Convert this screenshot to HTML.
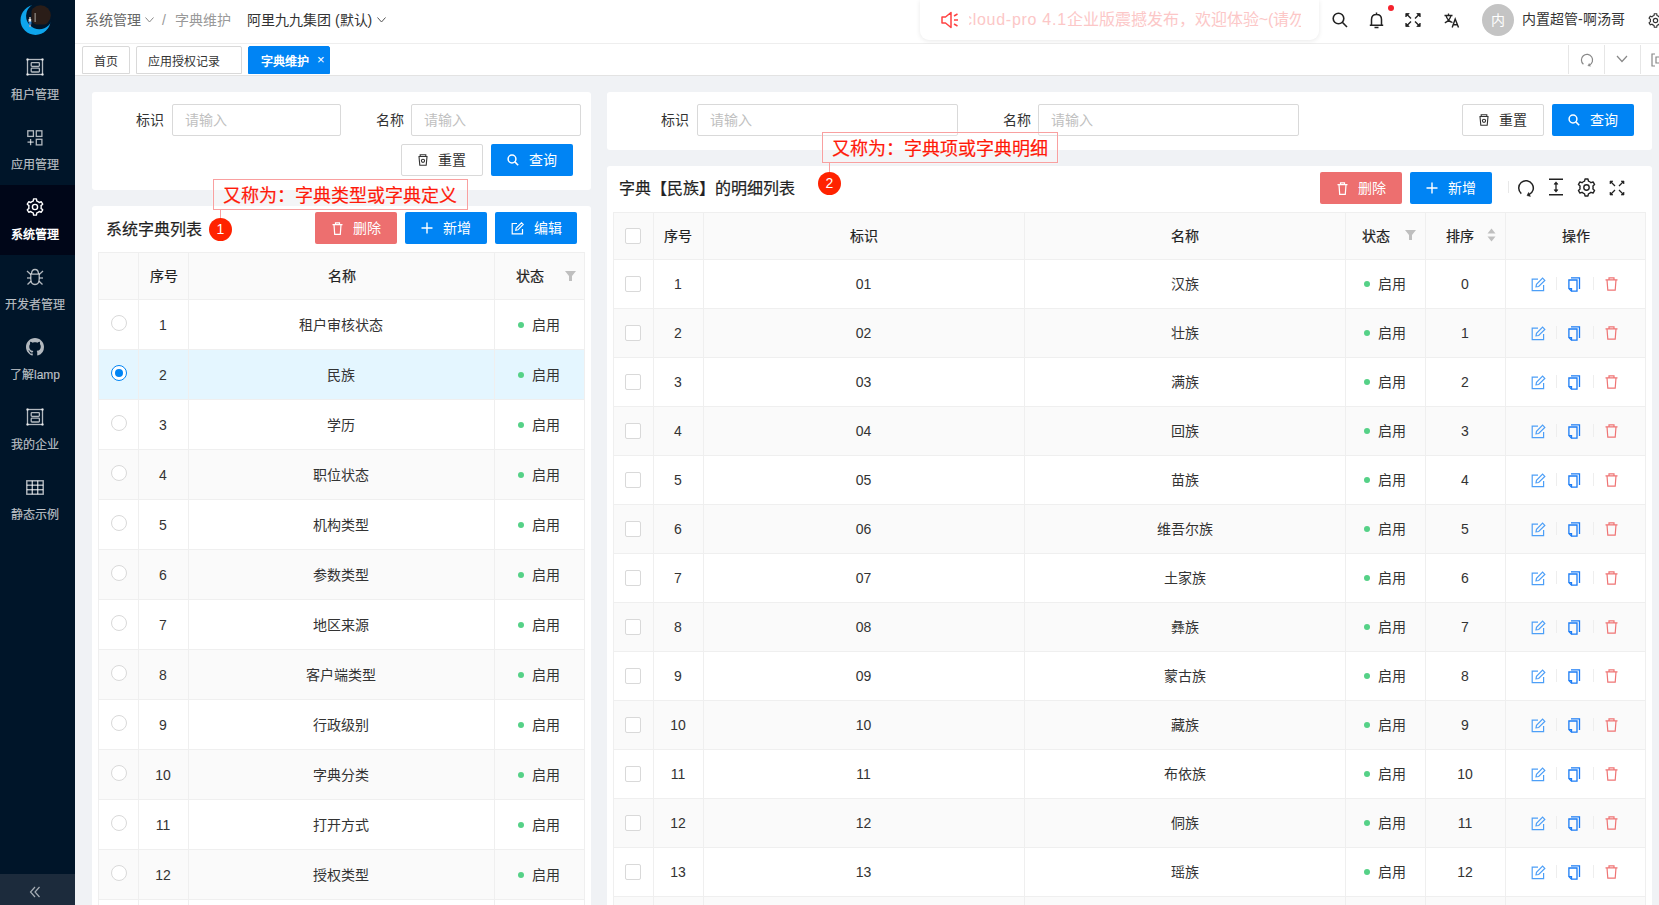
<!DOCTYPE html>
<html lang="zh-CN">
<head>
<meta charset="utf-8">
<style>
*{box-sizing:border-box;margin:0;padding:0}
html,body{width:1659px;height:905px;overflow:hidden;background:#f0f2f5;font-family:"Liberation Sans",sans-serif;font-size:14px;color:#333}
.abs{position:absolute}
svg{display:block}
#side{position:absolute;left:0;top:0;width:75px;height:905px;background:#001529}
.mi{position:absolute;left:0;width:75px;height:70px;color:rgba(255,255,255,.7)}
.mi.act{background:#000618;color:#fff}
.mi .ic{position:absolute;left:0;top:13px;width:75px;height:18px}
.mi .ic svg{}
.mi .tx{position:absolute;left:0;top:42px;width:70px;-webkit-text-stroke:0.15px currentColor;text-align:center;font-size:12px;line-height:16px;white-space:nowrap}
.mi.act .tx{font-weight:bold;-webkit-text-stroke:0}
#trig{position:absolute;left:0;top:874px;width:75px;height:31px;background:#1c2b3c}
#hdr{position:absolute;left:75px;top:0;width:1584px;height:44px;background:#fff;border-bottom:1px solid #eee}
#tabs{position:absolute;left:75px;top:44px;width:1584px;height:32px;background:#fff;border-bottom:1px solid #e3e3e3}
.tab{position:absolute;top:2px;height:28px;border:1px solid #d9d9d9;border-radius:2px 2px 0 0;font-size:12px;line-height:30px;color:#333;text-align:center;background:#fff;white-space:nowrap}
.tab.act{background:#0084f4;border-color:#0084f4;color:#fff;font-weight:bold}
.card{position:absolute;background:#fff;border-radius:3px}
.lbl{position:absolute;font-size:14px;line-height:20px;color:#333;white-space:nowrap}
.inp{position:absolute;height:32px;border:1px solid #d9d9d9;border-radius:2px;background:#fff;color:#bfbfbf;font-size:14px;line-height:30px;padding-left:12px;white-space:nowrap}
.btn{position:absolute;height:32px;border-radius:2px;font-size:14px;line-height:32px;text-align:center;white-space:nowrap}
.btn.def{border:1px solid #d9d9d9;background:#fff;color:#333;line-height:30px}
.btn.pri{background:#0084f4;color:#fff}
.btn.dan{background:#ed6f6f;color:#fff}
.btn svg{display:inline-block;vertical-align:middle;margin-right:10px;position:relative;top:-1px}
.tbl{position:absolute;border-left:1px solid #f0f0f0;border-top:1px solid #f0f0f0}
.row{position:absolute;left:0;border-bottom:1px solid #f0f0f0}
.cell{position:absolute;top:0;height:100%;border-right:1px solid #f0f0f0;text-align:center;white-space:nowrap}
.th{background:#fafafa;font-weight:bold;color:#333}
.dot{display:inline-block;width:6px;height:6px;border-radius:3px;background:#55d187;vertical-align:middle;margin-right:8px;position:relative;top:-1px}
.radio{position:absolute;width:16px;height:16px;border:1px solid #d9d9d9;border-radius:50%;background:#fff}
.radio.on{border-color:#0084f4}
.radio.on:after{content:"";position:absolute;left:3px;top:3px;width:8px;height:8px;border-radius:50%;background:#0084f4}
.chk{position:absolute;width:16px;height:16px;border:1px solid #d9d9d9;border-radius:2px;background:#fff}
.note{position:absolute;border:1px solid #f9a0a0;background:rgba(255,255,255,.25);box-shadow:0 0 2px rgba(255,255,255,.9);color:#ff1a0a;-webkit-text-stroke:0.2px currentColor;font-size:18px;white-space:nowrap}
.badge{position:absolute;width:23px;height:23px;border-radius:50%;background:#ff2200;color:#fff;font-size:14px;line-height:23px;text-align:center}
.vl{position:absolute;width:1px;background:#f9a0a0}
.med{-webkit-text-stroke:0.2px currentColor}
</style>
</head>
<body>

<div id="side">
<svg class="abs" style="left:0;top:0" width="75" height="45" viewBox="0 0 75 45">
<defs><clipPath id="dk"><rect x="31.5" y="5" width="20" height="19.5"/></clipPath></defs>
<circle cx="35.5" cy="20" r="15" fill="#0ea5ec"/>
<circle cx="39.3" cy="16" r="13.2" fill="#001529"/>
<circle cx="40.5" cy="15.5" r="10.3" fill="#2a1d18" clip-path="url(#dk)"/>
<rect x="34.5" y="13" width="1.3" height="9" fill="#8a8580"/>
<rect x="28.6" y="19" width="2.6" height="3" fill="#e8e8e8"/><rect x="28.8" y="21.5" width="2.6" height="3" fill="#2a7cc8"/><rect x="29.2" y="24.5" width="1.6" height="2.5" fill="#aab"/>
<circle cx="30" cy="18" r="1" fill="#c9b8a8"/>
</svg>
<div class="mi" style="top:45px"><div class="ic"><svg width="18" height="18" viewBox="0 0 18 18" fill="none" stroke="currentColor" stroke-width="1.3" style="margin-left:26px">
<rect x="1.5" y="1.5" width="15" height="15"/><rect x="5.2" y="4.6" width="8.2" height="3.8" rx="0.8"/><rect x="5.2" y="10.2" width="8.2" height="3.8" rx="0.8"/>
<circle cx="1.5" cy="1.5" r="1.2" fill="currentColor" stroke="none"/><circle cx="16.5" cy="1.5" r="1.2" fill="currentColor" stroke="none"/><circle cx="1.5" cy="16.5" r="1.2" fill="currentColor" stroke="none"/><circle cx="16.5" cy="16.5" r="1.2" fill="currentColor" stroke="none"/></svg></div><div class="tx">租户管理</div></div>
<div class="mi" style="top:115px"><div class="ic"><svg width="16" height="16" viewBox="0 0 16 16" fill="none" stroke="currentColor" stroke-width="1.3" style="margin-left:27px;margin-top:2px">
<rect x="0.8" y="0.8" width="5.6" height="5.6"/><rect x="9.3" y="0.8" width="5.6" height="5.6"/><rect x="9.3" y="9.3" width="5.6" height="5.6"/>
<line x1="3.6" y1="9" x2="3.6" y2="15.2"/><line x1="0.5" y1="12.1" x2="6.7" y2="12.1"/></svg></div><div class="tx">应用管理</div></div>
<div class="mi act" style="top:185px"><div class="ic"><svg width="18" height="18" viewBox="0 0 18 18" fill="none" stroke="currentColor" stroke-width="1.4" stroke-linejoin="round" style="margin-left:26px">
<path d="M7.19 3.07 L7.58 0.92 L10.42 0.92 L10.81 3.07 A6.2 6.2 0 0 1 13.23 4.47 L13.23 4.47 L15.28 3.73 L16.71 6.20 L15.04 7.61 A6.2 6.2 0 0 1 15.04 10.39 L15.04 10.39 L16.71 11.80 L15.28 14.27 L13.23 13.53 A6.2 6.2 0 0 1 10.81 14.93 L10.81 14.93 L10.42 17.08 L7.58 17.08 L7.19 14.93 A6.2 6.2 0 0 1 4.77 13.53 L4.77 13.53 L2.72 14.27 L1.29 11.80 L2.96 10.39 A6.2 6.2 0 0 1 2.96 7.61 L2.96 7.61 L1.29 6.20 L2.72 3.73 L4.77 4.47 A6.2 6.2 0 0 1 7.19 3.07Z"/><circle cx="9" cy="9" r="2.6"/></svg></div><div class="tx">系统管理</div></div>
<div class="mi" style="top:255px"><div class="ic"><svg width="18" height="18" viewBox="0 0 18 18" fill="none" stroke="currentColor" stroke-width="1.3" style="margin-left:26px">
<path d="M5.5 6 Q5.5 1.5 9 1.5 Q12.5 1.5 12.5 6"/><path d="M4.8 6.2 H13.2 V11 Q13.2 16.5 9 16.5 Q4.8 16.5 4.8 11Z"/>
<line x1="1" y1="3" x2="4.8" y2="6.5"/><line x1="17" y1="3" x2="13.2" y2="6.5"/><line x1="1" y1="10" x2="4.8" y2="10"/><line x1="17" y1="10" x2="13.2" y2="10"/><line x1="1.5" y1="16.5" x2="4.9" y2="13.2"/><line x1="16.5" y1="16.5" x2="13.1" y2="13.2"/></svg></div><div class="tx">开发者管理</div></div>
<div class="mi" style="top:325px"><div class="ic"><svg width="18" height="18" viewBox="0 0 16 16" style="margin-left:26px"><path fill="currentColor" d="M8 0C3.58 0 0 3.58 0 8c0 3.54 2.29 6.53 5.47 7.59.4.07.55-.17.55-.38 0-.19-.01-.82-.01-1.49-2.01.37-2.53-.49-2.69-.94-.09-.23-.48-.94-.82-1.13-.28-.15-.68-.52-.01-.53.63-.01 1.08.58 1.23.82.72 1.21 1.87.87 2.330.66.07-.52.28-.87.51-1.07-1.78-.2-3.640-.89-3.640-3.95 0-.87.31-1.59.82-2.15-.08-.2-.36-1.02.08-2.12 0 0 .67-.21 2.2.82.64-.18 1.32-.27 2-.27.68 0 1.36.09 2 .27 1.53-1.04 2.2-.82 2.2-.82.44 1.1.16 1.92.08 2.12.51.56.82 1.27.82 2.15 0 3.07-1.87 3.75-3.65 3.95.29.25.54.73.54 1.48 0 1.07-.01 1.93-.01 2.2 0 .21.15.46.55.38A8.013 8.013 0 0016 8c0-4.42-3.58-8-8-8z"/></svg></div><div class="tx">了解lamp</div></div>
<div class="mi" style="top:395px"><div class="ic"><svg width="18" height="18" viewBox="0 0 18 18" fill="none" stroke="currentColor" stroke-width="1.3" style="margin-left:26px">
<rect x="1.5" y="1.5" width="15" height="15"/><rect x="5.2" y="4.6" width="8.2" height="3.8" rx="0.8"/><rect x="5.2" y="10.2" width="8.2" height="3.8" rx="0.8"/>
<circle cx="1.5" cy="1.5" r="1.2" fill="currentColor" stroke="none"/><circle cx="16.5" cy="1.5" r="1.2" fill="currentColor" stroke="none"/><circle cx="1.5" cy="16.5" r="1.2" fill="currentColor" stroke="none"/><circle cx="16.5" cy="16.5" r="1.2" fill="currentColor" stroke="none"/></svg></div><div class="tx">我的企业</div></div>
<div class="mi" style="top:465px"><div class="ic"><svg width="18" height="15" viewBox="0 0 18 15" fill="none" stroke="currentColor" stroke-width="1.4" style="margin-left:26px;margin-top:2px">
<rect x="0.8" y="0.8" width="16.4" height="13.4"/><line x1="0.8" y1="5.2" x2="17.2" y2="5.2"/><line x1="0.8" y1="9.7" x2="17.2" y2="9.7"/><line x1="6.3" y1="0.8" x2="6.3" y2="14.2"/><line x1="11.7" y1="0.8" x2="11.7" y2="14.2"/></svg></div><div class="tx">静态示例</div></div>
<div id="trig"><svg class="abs" style="left:29px;top:12px" width="12" height="12" viewBox="0 0 12 12" fill="none" stroke="#a6adb4" stroke-width="1.2"><path d="M6 1 L1.5 6 L6 11 M10.5 1 L6 6 L10.5 11"/></svg></div>
</div>
<div id="hdr"></div>
<div class="abs" style="left:85px;top:10px;font-size:14px;line-height:20px;color:#666;white-space:nowrap">系统管理</div>
<svg class="abs" style="left:145px;top:17px" width="9" height="6" viewBox="0 0 9 6" fill="none" stroke="#888" stroke-width="1"><path d="M0.5 0.5 L4.5 5 L8.5 0.5"/></svg>
<div class="abs" style="left:162px;top:10px;font-size:14px;line-height:20px;color:#999">/</div>
<div class="abs" style="left:175px;top:10px;font-size:14px;line-height:20px;color:#999;white-space:nowrap">字典维护</div>
<div class="abs" style="left:247px;top:10px;font-size:14px;line-height:20px;color:#333;white-space:nowrap">阿里九九集团 (默认)</div>
<svg class="abs" style="left:377px;top:17px" width="9" height="6" viewBox="0 0 9 6" fill="none" stroke="#555" stroke-width="1"><path d="M0.5 0.5 L4.5 5 L8.5 0.5"/></svg>
<div class="abs" style="left:920px;top:0;width:399px;height:40px;background:#fff;border-radius:0 0 9px 9px;box-shadow:0 1px 5px rgba(0,0,0,.09);overflow:hidden"><svg class="abs" style="left:21px;top:11px" width="18" height="18" viewBox="0 0 18 18" fill="none" stroke="#ff4242" stroke-width="1.5" stroke-linejoin="round"><path d="M1 6 H4.5 L10 1.5 V16.5 L4.5 12 H1Z"/><path d="M13 5 L16.5 3 M13 9 H17 M13 13 L16.5 15"/></svg><div class="abs" style="left:49px;top:0;width:332px;height:40px;overflow:hidden"><div class="abs" style="left:-5px;top:10px;font-size:16px;line-height:20px;color:#fcc7c7;white-space:nowrap"><span style="letter-spacing:0.72px">cloud-pro 4.1</span>企业版震撼发布，欢迎体验~(请勿</div></div></div>
<svg class="abs" style="left:1332px;top:12px" width="16" height="16" viewBox="0 0 16 16" fill="none" stroke="#222" stroke-width="1.6"><circle cx="6.5" cy="6.5" r="5.3"/><line x1="10.3" y1="10.3" x2="15" y2="15"/></svg>
<svg class="abs" style="left:1369px;top:12px" width="15" height="17" viewBox="0 0 15 17" fill="none" stroke="#222" stroke-width="1.5"><path d="M2.5 13 V7.5 Q2.5 2.5 7.5 2.5 Q12.5 2.5 12.5 7.5 V13 M0.8 13.2 H14.2 M7.5 0.5 V2.5 M5.5 15.5 H9.5"/></svg>
<div class="abs" style="left:1388px;top:5px;width:6px;height:6px;border-radius:3px;background:#f5222d"></div>
<svg class="abs" style="left:1405px;top:13px" width="16" height="14" viewBox="0 0 16 14" fill="none" stroke="#222" stroke-width="1.4"><path d="M2 1.5 L6 5.5 M14 1.5 L10 5.5 M2 12.5 L6 8.5 M14 12.5 L10 8.5"/><path d="M0.8 0.5 H4.2 L0.8 3.9Z M15.2 0.5 H11.8 L15.2 3.9Z M0.8 13.5 H4.2 L0.8 10.1Z M15.2 13.5 H11.8 L15.2 10.1Z" fill="#222" stroke-width="0.8"/></svg>
<svg class="abs" style="left:1444px;top:13px" width="16" height="15" viewBox="0 0 16 15" fill="none" stroke="#222" stroke-width="1.3"><path d="M0.5 2.5 H8.5 M4.5 0.5 V2.5 M2 2.5 Q3.5 8 8.5 9.5 M7 2.5 Q5.5 8 0.8 9.8"/><path d="M8.2 14.5 L11.2 6 L14.5 14.5 M9.3 11.8 H13.3" stroke-width="1.4"/></svg>
<div class="abs" style="left:1482px;top:4px;width:32px;height:32px;border-radius:16px;background:#c4c4c4;color:#fff;font-size:14px;line-height:32px;text-align:center">内</div>
<div class="abs" style="left:1522px;top:9px;font-size:14px;line-height:20px;color:#333;white-space:nowrap">内置超管-啊汤哥</div>
<svg class="abs" style="left:1648px;top:13px" width="15" height="15" viewBox="0 0 18 18" fill="none" stroke="#333" stroke-width="1.4"><path d="M7.19 3.07 L7.58 0.92 L10.42 0.92 L10.81 3.07 A6.2 6.2 0 0 1 13.23 4.47 L13.23 4.47 L15.28 3.73 L16.71 6.20 L15.04 7.61 A6.2 6.2 0 0 1 15.04 10.39 L15.04 10.39 L16.71 11.80 L15.28 14.27 L13.23 13.53 A6.2 6.2 0 0 1 10.81 14.93 L10.81 14.93 L10.42 17.08 L7.58 17.08 L7.19 14.93 A6.2 6.2 0 0 1 4.77 13.53 L4.77 13.53 L2.72 14.27 L1.29 11.80 L2.96 10.39 A6.2 6.2 0 0 1 2.96 7.61 L2.96 7.61 L1.29 6.20 L2.72 3.73 L4.77 4.47 A6.2 6.2 0 0 1 7.19 3.07Z"/><circle cx="9" cy="9" r="2.6"/></svg>
<div id="tabs"></div>
<div class="tab" style="left:82px;top:46px;width:48px">首页</div>
<div class="tab" style="left:136px;top:46px;width:106px;text-align:left;padding-left:11px">应用授权记录</div>
<div class="tab act" style="left:248px;top:46px;width:82px;text-align:left;padding-left:12px">字典维护<span style="position:absolute;left:68px;top:-2px;font-weight:normal;font-size:13px">×</span></div>
<div class="abs" style="left:1568px;top:45px;width:1px;height:29px;background:#e6e6e6"></div>
<div class="abs" style="left:1604px;top:45px;width:1px;height:29px;background:#e6e6e6"></div>
<div class="abs" style="left:1640px;top:45px;width:1px;height:29px;background:#e6e6e6"></div>
<svg class="abs" style="left:1580px;top:53px" width="14" height="14" viewBox="0 0 14 14" fill="none" stroke="#888" stroke-width="1.2"><path d="M3.40 11.29 A5.6 5.6 0 1 1 9.28 12.12"/><path d="M7.82 12.77 L10.48 13.33 L9.18 10.41Z" fill="#888" stroke-width="0.4"/></svg>
<svg class="abs" style="left:1616px;top:55px" width="12" height="8" viewBox="0 0 12 8" fill="none" stroke="#888" stroke-width="1.2"><path d="M1 1 L6 6.5 L11 1"/></svg>
<svg class="abs" style="left:1651px;top:53px" width="14" height="14" viewBox="0 0 14 14" fill="none" stroke="#888" stroke-width="1.2"><path d="M4 1 H1 V13 H4 M5 4 H13 V10 H5Z"/></svg>
<div class="card" style="left:92px;top:92px;width:499px;height:98px"></div>
<div class="lbl" style="left:136px;top:110px">标识</div>
<div class="inp" style="left:172px;top:104px;width:169px">请输入</div>
<div class="lbl" style="left:376px;top:110px">名称</div>
<div class="inp" style="left:411px;top:104px;width:170px">请输入</div>
<div class="btn def" style="left:401px;top:144px;width:82px"><svg width="10" height="12" viewBox="0 0 10 12" fill="none" stroke="#333" stroke-width="1.1"><path d="M1 2.5 H9 L8.2 11.2 H1.8Z M2.2 2.5 V0.8 H7.8 V2.5"/><circle cx="5" cy="6.8" r="1.6"/></svg><span>重置</span></div>
<div class="btn pri" style="left:491px;top:144px;width:82px"><svg width="12" height="12" viewBox="0 0 12 12" fill="none" stroke="#fff" stroke-width="1.5"><circle cx="5" cy="5" r="3.9"/><line x1="7.9" y1="7.9" x2="11.2" y2="11.2"/></svg><span>查询</span></div>
<div class="card" style="left:92px;top:206px;width:499px;height:720px"></div>
<div class="abs med" style="left:106px;top:219px;font-size:16px;line-height:22px;color:#222;white-space:nowrap">系统字典列表</div>
<div class="btn dan" style="left:315px;top:212px;width:82px"><svg width="11" height="13" viewBox="0 0 11 13" fill="none" stroke="#fff" stroke-width="1.2"><path d="M0.5 2.6 H10.5 M2 2.6 L2.7 12.3 H8.3 L9 2.6 M3.5 2.6 V0.8 H7.5 V2.6"/></svg><span>删除</span></div>
<div class="btn pri" style="left:405px;top:212px;width:82px"><svg width="12" height="12" viewBox="0 0 12 12" fill="none" stroke="#fff" stroke-width="1.4"><path d="M6 0.5 V11.5 M0.5 6 H11.5"/></svg><span>新增</span></div>
<div class="btn pri" style="left:495px;top:212px;width:82px"><svg width="13" height="13" viewBox="0 0 13 13" fill="none" stroke="#fff" stroke-width="1.2"><path d="M6 1.5 H1.2 V11.8 H11.5 V7"/><path d="M4.8 8.2 L5.2 6 L10.5 0.8 L12.2 2.5 L7 7.8Z"/></svg><span>编辑</span></div>
<div class="abs" style="left:98px;top:252px;width:487px;height:653px;overflow:hidden">
<div class="abs" style="left:0;top:0;width:487px;height:48px;background:#fafafa;border-top:1px solid #efefef;border-bottom:1px solid #efefef"></div>
<div class="abs med" style="left:40px;top:0px;width:51px;height:48px;line-height:49px;text-align:center;font-weight:500;color:#222;white-space:nowrap">序号</div>
<div class="abs med" style="left:91px;top:0px;width:305px;height:48px;line-height:49px;text-align:center;font-weight:500;color:#222;white-space:nowrap">名称</div>
<div class="abs med" style="left:418px;top:0;height:48px;line-height:48px;font-weight:500;color:#222;white-space:nowrap">状态</div>
<svg class="abs" style="left:467px;top:19px" width="11" height="11" viewBox="0 0 11 11"><path d="M0 0 H11 L7 5 V10 H4 V5Z" fill="#bfbfbf"/></svg>
<div class="abs" style="left:0;top:48px;width:487px;height:50px;background:#fff;border-bottom:1px solid #efefef"><div class="radio" style="left:13px;top:15px"></div><div class="abs" style="left:40px;top:1px;width:50px;line-height:49px;text-align:center">1</div><div class="abs" style="left:90px;top:1px;width:306px;line-height:49px;text-align:center">租户审核状态</div><div class="abs" style="left:420px;top:1px;line-height:49px;white-space:nowrap"><span class="dot"></span>启用</div></div>
<div class="abs" style="left:0;top:98px;width:487px;height:50px;background:#e4f6ff;border-bottom:1px solid #efefef"><div class="radio on" style="left:13px;top:15px"></div><div class="abs" style="left:40px;top:1px;width:50px;line-height:49px;text-align:center">2</div><div class="abs" style="left:90px;top:1px;width:306px;line-height:49px;text-align:center">民族</div><div class="abs" style="left:420px;top:1px;line-height:49px;white-space:nowrap"><span class="dot"></span>启用</div></div>
<div class="abs" style="left:0;top:148px;width:487px;height:50px;background:#fff;border-bottom:1px solid #efefef"><div class="radio" style="left:13px;top:15px"></div><div class="abs" style="left:40px;top:1px;width:50px;line-height:49px;text-align:center">3</div><div class="abs" style="left:90px;top:1px;width:306px;line-height:49px;text-align:center">学历</div><div class="abs" style="left:420px;top:1px;line-height:49px;white-space:nowrap"><span class="dot"></span>启用</div></div>
<div class="abs" style="left:0;top:198px;width:487px;height:50px;background:#fafafa;border-bottom:1px solid #efefef"><div class="radio" style="left:13px;top:15px"></div><div class="abs" style="left:40px;top:1px;width:50px;line-height:49px;text-align:center">4</div><div class="abs" style="left:90px;top:1px;width:306px;line-height:49px;text-align:center">职位状态</div><div class="abs" style="left:420px;top:1px;line-height:49px;white-space:nowrap"><span class="dot"></span>启用</div></div>
<div class="abs" style="left:0;top:248px;width:487px;height:50px;background:#fff;border-bottom:1px solid #efefef"><div class="radio" style="left:13px;top:15px"></div><div class="abs" style="left:40px;top:1px;width:50px;line-height:49px;text-align:center">5</div><div class="abs" style="left:90px;top:1px;width:306px;line-height:49px;text-align:center">机构类型</div><div class="abs" style="left:420px;top:1px;line-height:49px;white-space:nowrap"><span class="dot"></span>启用</div></div>
<div class="abs" style="left:0;top:298px;width:487px;height:50px;background:#fafafa;border-bottom:1px solid #efefef"><div class="radio" style="left:13px;top:15px"></div><div class="abs" style="left:40px;top:1px;width:50px;line-height:49px;text-align:center">6</div><div class="abs" style="left:90px;top:1px;width:306px;line-height:49px;text-align:center">参数类型</div><div class="abs" style="left:420px;top:1px;line-height:49px;white-space:nowrap"><span class="dot"></span>启用</div></div>
<div class="abs" style="left:0;top:348px;width:487px;height:50px;background:#fff;border-bottom:1px solid #efefef"><div class="radio" style="left:13px;top:15px"></div><div class="abs" style="left:40px;top:1px;width:50px;line-height:49px;text-align:center">7</div><div class="abs" style="left:90px;top:1px;width:306px;line-height:49px;text-align:center">地区来源</div><div class="abs" style="left:420px;top:1px;line-height:49px;white-space:nowrap"><span class="dot"></span>启用</div></div>
<div class="abs" style="left:0;top:398px;width:487px;height:50px;background:#fafafa;border-bottom:1px solid #efefef"><div class="radio" style="left:13px;top:15px"></div><div class="abs" style="left:40px;top:1px;width:50px;line-height:49px;text-align:center">8</div><div class="abs" style="left:90px;top:1px;width:306px;line-height:49px;text-align:center">客户端类型</div><div class="abs" style="left:420px;top:1px;line-height:49px;white-space:nowrap"><span class="dot"></span>启用</div></div>
<div class="abs" style="left:0;top:448px;width:487px;height:50px;background:#fff;border-bottom:1px solid #efefef"><div class="radio" style="left:13px;top:15px"></div><div class="abs" style="left:40px;top:1px;width:50px;line-height:49px;text-align:center">9</div><div class="abs" style="left:90px;top:1px;width:306px;line-height:49px;text-align:center">行政级别</div><div class="abs" style="left:420px;top:1px;line-height:49px;white-space:nowrap"><span class="dot"></span>启用</div></div>
<div class="abs" style="left:0;top:498px;width:487px;height:50px;background:#fafafa;border-bottom:1px solid #efefef"><div class="radio" style="left:13px;top:15px"></div><div class="abs" style="left:40px;top:1px;width:50px;line-height:49px;text-align:center">10</div><div class="abs" style="left:90px;top:1px;width:306px;line-height:49px;text-align:center">字典分类</div><div class="abs" style="left:420px;top:1px;line-height:49px;white-space:nowrap"><span class="dot"></span>启用</div></div>
<div class="abs" style="left:0;top:548px;width:487px;height:50px;background:#fff;border-bottom:1px solid #efefef"><div class="radio" style="left:13px;top:15px"></div><div class="abs" style="left:40px;top:1px;width:50px;line-height:49px;text-align:center">11</div><div class="abs" style="left:90px;top:1px;width:306px;line-height:49px;text-align:center">打开方式</div><div class="abs" style="left:420px;top:1px;line-height:49px;white-space:nowrap"><span class="dot"></span>启用</div></div>
<div class="abs" style="left:0;top:598px;width:487px;height:50px;background:#fafafa;border-bottom:1px solid #efefef"><div class="radio" style="left:13px;top:15px"></div><div class="abs" style="left:40px;top:1px;width:50px;line-height:49px;text-align:center">12</div><div class="abs" style="left:90px;top:1px;width:306px;line-height:49px;text-align:center">授权类型</div><div class="abs" style="left:420px;top:1px;line-height:49px;white-space:nowrap"><span class="dot"></span>启用</div></div>
<div class="abs" style="left:0;top:648px;width:487px;height:50px;background:#fff;border-bottom:1px solid #efefef"><div class="radio" style="left:13px;top:15px"></div><div class="abs" style="left:40px;top:1px;width:50px;line-height:49px;text-align:center">13</div><div class="abs" style="left:90px;top:1px;width:306px;line-height:49px;text-align:center">码表类型</div><div class="abs" style="left:420px;top:1px;line-height:49px;white-space:nowrap"><span class="dot"></span>启用</div></div>
<div class="abs" style="left:0px;top:0;width:1px;height:653px;background:#efefef"></div>
<div class="abs" style="left:40px;top:0;width:1px;height:653px;background:#efefef"></div>
<div class="abs" style="left:90px;top:0;width:1px;height:653px;background:#efefef"></div>
<div class="abs" style="left:396px;top:0;width:1px;height:653px;background:#efefef"></div>
<div class="abs" style="left:486px;top:0;width:1px;height:653px;background:#efefef"></div>
</div>
<div class="card" style="left:607px;top:92px;width:1045px;height:58px"></div>
<div class="lbl" style="left:661px;top:110px">标识</div>
<div class="inp" style="left:697px;top:104px;width:261px">请输入</div>
<div class="lbl" style="left:1003px;top:110px">名称</div>
<div class="inp" style="left:1038px;top:104px;width:261px">请输入</div>
<div class="btn def" style="left:1462px;top:104px;width:82px"><svg width="10" height="12" viewBox="0 0 10 12" fill="none" stroke="#333" stroke-width="1.1"><path d="M1 2.5 H9 L8.2 11.2 H1.8Z M2.2 2.5 V0.8 H7.8 V2.5"/><circle cx="5" cy="6.8" r="1.6"/></svg><span>重置</span></div>
<div class="btn pri" style="left:1552px;top:104px;width:82px"><svg width="12" height="12" viewBox="0 0 12 12" fill="none" stroke="#fff" stroke-width="1.5"><circle cx="5" cy="5" r="3.9"/><line x1="7.9" y1="7.9" x2="11.2" y2="11.2"/></svg><span>查询</span></div>
<div class="card" style="left:607px;top:166px;width:1045px;height:760px"></div>
<div class="abs med" style="left:619px;top:178px;font-size:16px;line-height:22px;color:#222;white-space:nowrap">字典【民族】的明细列表</div>
<div class="btn dan" style="left:1320px;top:172px;width:82px"><svg width="11" height="13" viewBox="0 0 11 13" fill="none" stroke="#fff" stroke-width="1.2"><path d="M0.5 2.6 H10.5 M2 2.6 L2.7 12.3 H8.3 L9 2.6 M3.5 2.6 V0.8 H7.5 V2.6"/></svg><span>删除</span></div>
<div class="btn pri" style="left:1410px;top:172px;width:82px"><svg width="12" height="12" viewBox="0 0 12 12" fill="none" stroke="#fff" stroke-width="1.4"><path d="M6 0.5 V11.5 M0.5 6 H11.5"/></svg><span>新增</span></div>
<div class="abs" style="left:1508px;top:181px;width:1px;height:12px;background:#e8e8e8"></div>
<svg class="abs" style="left:1517px;top:179px" width="18" height="18" viewBox="0 0 18 18" fill="none" stroke="#222" stroke-width="1.5"><path d="M4.31 14.59 A7.3 7.3 0 1 1 11.97 15.67"/><path d="M9.96 16.56 L13.41 17.43 L11.62 13.42Z" fill="#222" stroke-width="0.5"/></svg>
<svg class="abs" style="left:1548px;top:178px" width="16" height="18" viewBox="0 0 16 18" fill="none" stroke="#222" stroke-width="1.5"><path d="M1 1.2 H15 M1 16.8 H15"/><path d="M8 5 V13" stroke-width="1.3"/><path d="M6 6.2 L8 3.8 L10 6.2Z M6 11.8 L8 14.2 L10 11.8Z" fill="#222" stroke-width="0.6"/></svg>
<svg class="abs" style="left:1577px;top:178px" width="19" height="19" viewBox="0 0 19 19" fill="none" stroke="#222" stroke-width="1.4" stroke-linejoin="round"><path d="M7.57 3.19 L8.01 1.03 L10.99 1.03 L11.43 3.19 A6.6 6.6 0 0 1 14.00 4.67 L14.00 4.67 L16.09 3.97 L17.58 6.56 L15.93 8.02 A6.6 6.6 0 0 1 15.93 10.98 L15.93 10.98 L17.58 12.44 L16.09 15.03 L14.00 14.33 A6.6 6.6 0 0 1 11.43 15.81 L11.43 15.81 L10.99 17.97 L8.01 17.97 L7.57 15.81 A6.6 6.6 0 0 1 5.00 14.33 L5.00 14.33 L2.91 15.03 L1.42 12.44 L3.07 10.98 A6.6 6.6 0 0 1 3.07 8.02 L3.07 8.02 L1.42 6.56 L2.91 3.97 L5.00 4.67 A6.6 6.6 0 0 1 7.57 3.19Z"/><circle cx="9.5" cy="9.5" r="2.7"/></svg>
<svg class="abs" style="left:1609px;top:180px" width="16" height="16" viewBox="0 0 16 16" fill="none" stroke="#222" stroke-width="1.5"><path d="M2 2 L6 6 M14 2 L10 6 M2 14 L6 10 M14 14 L10 10" stroke-width="1.3"/><path d="M1 1 H4 L1 4Z M15 1 H12 L15 4Z M1 15 H4 L1 12Z M15 15 H12 L15 12Z" fill="#222" stroke-width="0.6"/></svg>
<div class="abs" style="left:613px;top:212px;width:1033px;height:693px;overflow:hidden">
<div class="abs" style="left:0;top:0;width:1033px;height:48px;background:#fafafa;border-top:1px solid #efefef;border-bottom:1px solid #efefef"></div>
<div class="chk" style="left:12px;top:16px"></div>
<div class="abs med" style="left:40px;top:0px;width:50px;height:47px;line-height:48px;text-align:center;font-weight:500;color:#222;white-space:nowrap">序号</div>
<div class="abs med" style="left:90px;top:0px;width:321px;height:47px;line-height:48px;text-align:center;font-weight:500;color:#222;white-space:nowrap">标识</div>
<div class="abs med" style="left:411px;top:0px;width:322px;height:47px;line-height:48px;text-align:center;font-weight:500;color:#222;white-space:nowrap">名称</div>
<div class="abs med" style="left:749px;top:0;line-height:48px;font-weight:500;color:#222;white-space:nowrap">状态</div>
<svg class="abs" style="left:792px;top:18px" width="11" height="11" viewBox="0 0 11 11"><path d="M0 0 H11 L7 5 V10 H4 V5Z" fill="#bfbfbf"/></svg>
<div class="abs med" style="left:833px;top:0;line-height:48px;font-weight:500;color:#222;white-space:nowrap">排序</div>
<svg class="abs" style="left:874px;top:16px" width="9" height="14" viewBox="0 0 9 14"><path d="M4.5 0.5 L8.5 5.5 H0.5Z M4.5 13.5 L8.5 8.5 H0.5Z" fill="#bfbfbf"/></svg>
<div class="abs med" style="left:892px;top:0px;width:141px;height:47px;line-height:48px;text-align:center;font-weight:500;color:#222;white-space:nowrap">操作</div>
<div class="abs" style="left:0;top:48px;width:1033px;height:49px;background:#fff;border-bottom:1px solid #efefef"><div class="chk" style="left:12px;top:16px"></div><div class="abs" style="left:40px;top:0;width:50px;line-height:48px;text-align:center">1</div><div class="abs" style="left:90px;top:0;width:321px;line-height:48px;text-align:center">01</div><div class="abs" style="left:411px;top:0;width:322px;line-height:48px;text-align:center">汉族</div><div class="abs" style="left:751px;top:0;line-height:48px;white-space:nowrap"><span class="dot"></span>启用</div><div class="abs" style="left:812px;top:0;width:80px;line-height:48px;text-align:center">0</div><svg class="abs" style="left:918px;top:17px" width="15" height="15" viewBox="0 0 15 15" fill="none" stroke="#4d9ff7" stroke-width="1.2"><path d="M7 2.2 H1.2 V13.6 H12.6 V8"/><path d="M5 9.8 L5.5 7.3 L11.6 1.2 L13.8 3.4 L7.7 9.5Z"/></svg><div class="abs" style="left:943px;top:17px;width:1px;height:13px;background:#eee"></div><svg class="abs" style="left:955px;top:17px" width="13" height="15" viewBox="0 0 13 15" fill="none" stroke="#1b7cf5" stroke-width="1.3"><path d="M3 0.8 H11.5 V12"/><path d="M0.9 3 H9 V14.2 H3.5 L0.9 11.6Z"/><path d="M0.9 11.6 H3.5 V14.2"/></svg><div class="abs" style="left:980px;top:17px;width:1px;height:13px;background:#eee"></div><svg class="abs" style="left:992px;top:17px" width="13" height="14" viewBox="0 0 13 14" fill="none" stroke="#ef7474" stroke-width="1.2"><path d="M0.5 2.8 H12.5 M2 2.8 L2.8 13.2 H10.2 L11 2.8 M4 2.8 V0.8 H9 V2.8"/></svg></div>
<div class="abs" style="left:0;top:97px;width:1033px;height:49px;background:#fafafa;border-bottom:1px solid #efefef"><div class="chk" style="left:12px;top:16px"></div><div class="abs" style="left:40px;top:0;width:50px;line-height:48px;text-align:center">2</div><div class="abs" style="left:90px;top:0;width:321px;line-height:48px;text-align:center">02</div><div class="abs" style="left:411px;top:0;width:322px;line-height:48px;text-align:center">壮族</div><div class="abs" style="left:751px;top:0;line-height:48px;white-space:nowrap"><span class="dot"></span>启用</div><div class="abs" style="left:812px;top:0;width:80px;line-height:48px;text-align:center">1</div><svg class="abs" style="left:918px;top:17px" width="15" height="15" viewBox="0 0 15 15" fill="none" stroke="#4d9ff7" stroke-width="1.2"><path d="M7 2.2 H1.2 V13.6 H12.6 V8"/><path d="M5 9.8 L5.5 7.3 L11.6 1.2 L13.8 3.4 L7.7 9.5Z"/></svg><div class="abs" style="left:943px;top:17px;width:1px;height:13px;background:#eee"></div><svg class="abs" style="left:955px;top:17px" width="13" height="15" viewBox="0 0 13 15" fill="none" stroke="#1b7cf5" stroke-width="1.3"><path d="M3 0.8 H11.5 V12"/><path d="M0.9 3 H9 V14.2 H3.5 L0.9 11.6Z"/><path d="M0.9 11.6 H3.5 V14.2"/></svg><div class="abs" style="left:980px;top:17px;width:1px;height:13px;background:#eee"></div><svg class="abs" style="left:992px;top:17px" width="13" height="14" viewBox="0 0 13 14" fill="none" stroke="#ef7474" stroke-width="1.2"><path d="M0.5 2.8 H12.5 M2 2.8 L2.8 13.2 H10.2 L11 2.8 M4 2.8 V0.8 H9 V2.8"/></svg></div>
<div class="abs" style="left:0;top:146px;width:1033px;height:49px;background:#fff;border-bottom:1px solid #efefef"><div class="chk" style="left:12px;top:16px"></div><div class="abs" style="left:40px;top:0;width:50px;line-height:48px;text-align:center">3</div><div class="abs" style="left:90px;top:0;width:321px;line-height:48px;text-align:center">03</div><div class="abs" style="left:411px;top:0;width:322px;line-height:48px;text-align:center">满族</div><div class="abs" style="left:751px;top:0;line-height:48px;white-space:nowrap"><span class="dot"></span>启用</div><div class="abs" style="left:812px;top:0;width:80px;line-height:48px;text-align:center">2</div><svg class="abs" style="left:918px;top:17px" width="15" height="15" viewBox="0 0 15 15" fill="none" stroke="#4d9ff7" stroke-width="1.2"><path d="M7 2.2 H1.2 V13.6 H12.6 V8"/><path d="M5 9.8 L5.5 7.3 L11.6 1.2 L13.8 3.4 L7.7 9.5Z"/></svg><div class="abs" style="left:943px;top:17px;width:1px;height:13px;background:#eee"></div><svg class="abs" style="left:955px;top:17px" width="13" height="15" viewBox="0 0 13 15" fill="none" stroke="#1b7cf5" stroke-width="1.3"><path d="M3 0.8 H11.5 V12"/><path d="M0.9 3 H9 V14.2 H3.5 L0.9 11.6Z"/><path d="M0.9 11.6 H3.5 V14.2"/></svg><div class="abs" style="left:980px;top:17px;width:1px;height:13px;background:#eee"></div><svg class="abs" style="left:992px;top:17px" width="13" height="14" viewBox="0 0 13 14" fill="none" stroke="#ef7474" stroke-width="1.2"><path d="M0.5 2.8 H12.5 M2 2.8 L2.8 13.2 H10.2 L11 2.8 M4 2.8 V0.8 H9 V2.8"/></svg></div>
<div class="abs" style="left:0;top:195px;width:1033px;height:49px;background:#fafafa;border-bottom:1px solid #efefef"><div class="chk" style="left:12px;top:16px"></div><div class="abs" style="left:40px;top:0;width:50px;line-height:48px;text-align:center">4</div><div class="abs" style="left:90px;top:0;width:321px;line-height:48px;text-align:center">04</div><div class="abs" style="left:411px;top:0;width:322px;line-height:48px;text-align:center">回族</div><div class="abs" style="left:751px;top:0;line-height:48px;white-space:nowrap"><span class="dot"></span>启用</div><div class="abs" style="left:812px;top:0;width:80px;line-height:48px;text-align:center">3</div><svg class="abs" style="left:918px;top:17px" width="15" height="15" viewBox="0 0 15 15" fill="none" stroke="#4d9ff7" stroke-width="1.2"><path d="M7 2.2 H1.2 V13.6 H12.6 V8"/><path d="M5 9.8 L5.5 7.3 L11.6 1.2 L13.8 3.4 L7.7 9.5Z"/></svg><div class="abs" style="left:943px;top:17px;width:1px;height:13px;background:#eee"></div><svg class="abs" style="left:955px;top:17px" width="13" height="15" viewBox="0 0 13 15" fill="none" stroke="#1b7cf5" stroke-width="1.3"><path d="M3 0.8 H11.5 V12"/><path d="M0.9 3 H9 V14.2 H3.5 L0.9 11.6Z"/><path d="M0.9 11.6 H3.5 V14.2"/></svg><div class="abs" style="left:980px;top:17px;width:1px;height:13px;background:#eee"></div><svg class="abs" style="left:992px;top:17px" width="13" height="14" viewBox="0 0 13 14" fill="none" stroke="#ef7474" stroke-width="1.2"><path d="M0.5 2.8 H12.5 M2 2.8 L2.8 13.2 H10.2 L11 2.8 M4 2.8 V0.8 H9 V2.8"/></svg></div>
<div class="abs" style="left:0;top:244px;width:1033px;height:49px;background:#fff;border-bottom:1px solid #efefef"><div class="chk" style="left:12px;top:16px"></div><div class="abs" style="left:40px;top:0;width:50px;line-height:48px;text-align:center">5</div><div class="abs" style="left:90px;top:0;width:321px;line-height:48px;text-align:center">05</div><div class="abs" style="left:411px;top:0;width:322px;line-height:48px;text-align:center">苗族</div><div class="abs" style="left:751px;top:0;line-height:48px;white-space:nowrap"><span class="dot"></span>启用</div><div class="abs" style="left:812px;top:0;width:80px;line-height:48px;text-align:center">4</div><svg class="abs" style="left:918px;top:17px" width="15" height="15" viewBox="0 0 15 15" fill="none" stroke="#4d9ff7" stroke-width="1.2"><path d="M7 2.2 H1.2 V13.6 H12.6 V8"/><path d="M5 9.8 L5.5 7.3 L11.6 1.2 L13.8 3.4 L7.7 9.5Z"/></svg><div class="abs" style="left:943px;top:17px;width:1px;height:13px;background:#eee"></div><svg class="abs" style="left:955px;top:17px" width="13" height="15" viewBox="0 0 13 15" fill="none" stroke="#1b7cf5" stroke-width="1.3"><path d="M3 0.8 H11.5 V12"/><path d="M0.9 3 H9 V14.2 H3.5 L0.9 11.6Z"/><path d="M0.9 11.6 H3.5 V14.2"/></svg><div class="abs" style="left:980px;top:17px;width:1px;height:13px;background:#eee"></div><svg class="abs" style="left:992px;top:17px" width="13" height="14" viewBox="0 0 13 14" fill="none" stroke="#ef7474" stroke-width="1.2"><path d="M0.5 2.8 H12.5 M2 2.8 L2.8 13.2 H10.2 L11 2.8 M4 2.8 V0.8 H9 V2.8"/></svg></div>
<div class="abs" style="left:0;top:293px;width:1033px;height:49px;background:#fafafa;border-bottom:1px solid #efefef"><div class="chk" style="left:12px;top:16px"></div><div class="abs" style="left:40px;top:0;width:50px;line-height:48px;text-align:center">6</div><div class="abs" style="left:90px;top:0;width:321px;line-height:48px;text-align:center">06</div><div class="abs" style="left:411px;top:0;width:322px;line-height:48px;text-align:center">维吾尔族</div><div class="abs" style="left:751px;top:0;line-height:48px;white-space:nowrap"><span class="dot"></span>启用</div><div class="abs" style="left:812px;top:0;width:80px;line-height:48px;text-align:center">5</div><svg class="abs" style="left:918px;top:17px" width="15" height="15" viewBox="0 0 15 15" fill="none" stroke="#4d9ff7" stroke-width="1.2"><path d="M7 2.2 H1.2 V13.6 H12.6 V8"/><path d="M5 9.8 L5.5 7.3 L11.6 1.2 L13.8 3.4 L7.7 9.5Z"/></svg><div class="abs" style="left:943px;top:17px;width:1px;height:13px;background:#eee"></div><svg class="abs" style="left:955px;top:17px" width="13" height="15" viewBox="0 0 13 15" fill="none" stroke="#1b7cf5" stroke-width="1.3"><path d="M3 0.8 H11.5 V12"/><path d="M0.9 3 H9 V14.2 H3.5 L0.9 11.6Z"/><path d="M0.9 11.6 H3.5 V14.2"/></svg><div class="abs" style="left:980px;top:17px;width:1px;height:13px;background:#eee"></div><svg class="abs" style="left:992px;top:17px" width="13" height="14" viewBox="0 0 13 14" fill="none" stroke="#ef7474" stroke-width="1.2"><path d="M0.5 2.8 H12.5 M2 2.8 L2.8 13.2 H10.2 L11 2.8 M4 2.8 V0.8 H9 V2.8"/></svg></div>
<div class="abs" style="left:0;top:342px;width:1033px;height:49px;background:#fff;border-bottom:1px solid #efefef"><div class="chk" style="left:12px;top:16px"></div><div class="abs" style="left:40px;top:0;width:50px;line-height:48px;text-align:center">7</div><div class="abs" style="left:90px;top:0;width:321px;line-height:48px;text-align:center">07</div><div class="abs" style="left:411px;top:0;width:322px;line-height:48px;text-align:center">土家族</div><div class="abs" style="left:751px;top:0;line-height:48px;white-space:nowrap"><span class="dot"></span>启用</div><div class="abs" style="left:812px;top:0;width:80px;line-height:48px;text-align:center">6</div><svg class="abs" style="left:918px;top:17px" width="15" height="15" viewBox="0 0 15 15" fill="none" stroke="#4d9ff7" stroke-width="1.2"><path d="M7 2.2 H1.2 V13.6 H12.6 V8"/><path d="M5 9.8 L5.5 7.3 L11.6 1.2 L13.8 3.4 L7.7 9.5Z"/></svg><div class="abs" style="left:943px;top:17px;width:1px;height:13px;background:#eee"></div><svg class="abs" style="left:955px;top:17px" width="13" height="15" viewBox="0 0 13 15" fill="none" stroke="#1b7cf5" stroke-width="1.3"><path d="M3 0.8 H11.5 V12"/><path d="M0.9 3 H9 V14.2 H3.5 L0.9 11.6Z"/><path d="M0.9 11.6 H3.5 V14.2"/></svg><div class="abs" style="left:980px;top:17px;width:1px;height:13px;background:#eee"></div><svg class="abs" style="left:992px;top:17px" width="13" height="14" viewBox="0 0 13 14" fill="none" stroke="#ef7474" stroke-width="1.2"><path d="M0.5 2.8 H12.5 M2 2.8 L2.8 13.2 H10.2 L11 2.8 M4 2.8 V0.8 H9 V2.8"/></svg></div>
<div class="abs" style="left:0;top:391px;width:1033px;height:49px;background:#fafafa;border-bottom:1px solid #efefef"><div class="chk" style="left:12px;top:16px"></div><div class="abs" style="left:40px;top:0;width:50px;line-height:48px;text-align:center">8</div><div class="abs" style="left:90px;top:0;width:321px;line-height:48px;text-align:center">08</div><div class="abs" style="left:411px;top:0;width:322px;line-height:48px;text-align:center">彝族</div><div class="abs" style="left:751px;top:0;line-height:48px;white-space:nowrap"><span class="dot"></span>启用</div><div class="abs" style="left:812px;top:0;width:80px;line-height:48px;text-align:center">7</div><svg class="abs" style="left:918px;top:17px" width="15" height="15" viewBox="0 0 15 15" fill="none" stroke="#4d9ff7" stroke-width="1.2"><path d="M7 2.2 H1.2 V13.6 H12.6 V8"/><path d="M5 9.8 L5.5 7.3 L11.6 1.2 L13.8 3.4 L7.7 9.5Z"/></svg><div class="abs" style="left:943px;top:17px;width:1px;height:13px;background:#eee"></div><svg class="abs" style="left:955px;top:17px" width="13" height="15" viewBox="0 0 13 15" fill="none" stroke="#1b7cf5" stroke-width="1.3"><path d="M3 0.8 H11.5 V12"/><path d="M0.9 3 H9 V14.2 H3.5 L0.9 11.6Z"/><path d="M0.9 11.6 H3.5 V14.2"/></svg><div class="abs" style="left:980px;top:17px;width:1px;height:13px;background:#eee"></div><svg class="abs" style="left:992px;top:17px" width="13" height="14" viewBox="0 0 13 14" fill="none" stroke="#ef7474" stroke-width="1.2"><path d="M0.5 2.8 H12.5 M2 2.8 L2.8 13.2 H10.2 L11 2.8 M4 2.8 V0.8 H9 V2.8"/></svg></div>
<div class="abs" style="left:0;top:440px;width:1033px;height:49px;background:#fff;border-bottom:1px solid #efefef"><div class="chk" style="left:12px;top:16px"></div><div class="abs" style="left:40px;top:0;width:50px;line-height:48px;text-align:center">9</div><div class="abs" style="left:90px;top:0;width:321px;line-height:48px;text-align:center">09</div><div class="abs" style="left:411px;top:0;width:322px;line-height:48px;text-align:center">蒙古族</div><div class="abs" style="left:751px;top:0;line-height:48px;white-space:nowrap"><span class="dot"></span>启用</div><div class="abs" style="left:812px;top:0;width:80px;line-height:48px;text-align:center">8</div><svg class="abs" style="left:918px;top:17px" width="15" height="15" viewBox="0 0 15 15" fill="none" stroke="#4d9ff7" stroke-width="1.2"><path d="M7 2.2 H1.2 V13.6 H12.6 V8"/><path d="M5 9.8 L5.5 7.3 L11.6 1.2 L13.8 3.4 L7.7 9.5Z"/></svg><div class="abs" style="left:943px;top:17px;width:1px;height:13px;background:#eee"></div><svg class="abs" style="left:955px;top:17px" width="13" height="15" viewBox="0 0 13 15" fill="none" stroke="#1b7cf5" stroke-width="1.3"><path d="M3 0.8 H11.5 V12"/><path d="M0.9 3 H9 V14.2 H3.5 L0.9 11.6Z"/><path d="M0.9 11.6 H3.5 V14.2"/></svg><div class="abs" style="left:980px;top:17px;width:1px;height:13px;background:#eee"></div><svg class="abs" style="left:992px;top:17px" width="13" height="14" viewBox="0 0 13 14" fill="none" stroke="#ef7474" stroke-width="1.2"><path d="M0.5 2.8 H12.5 M2 2.8 L2.8 13.2 H10.2 L11 2.8 M4 2.8 V0.8 H9 V2.8"/></svg></div>
<div class="abs" style="left:0;top:489px;width:1033px;height:49px;background:#fafafa;border-bottom:1px solid #efefef"><div class="chk" style="left:12px;top:16px"></div><div class="abs" style="left:40px;top:0;width:50px;line-height:48px;text-align:center">10</div><div class="abs" style="left:90px;top:0;width:321px;line-height:48px;text-align:center">10</div><div class="abs" style="left:411px;top:0;width:322px;line-height:48px;text-align:center">藏族</div><div class="abs" style="left:751px;top:0;line-height:48px;white-space:nowrap"><span class="dot"></span>启用</div><div class="abs" style="left:812px;top:0;width:80px;line-height:48px;text-align:center">9</div><svg class="abs" style="left:918px;top:17px" width="15" height="15" viewBox="0 0 15 15" fill="none" stroke="#4d9ff7" stroke-width="1.2"><path d="M7 2.2 H1.2 V13.6 H12.6 V8"/><path d="M5 9.8 L5.5 7.3 L11.6 1.2 L13.8 3.4 L7.7 9.5Z"/></svg><div class="abs" style="left:943px;top:17px;width:1px;height:13px;background:#eee"></div><svg class="abs" style="left:955px;top:17px" width="13" height="15" viewBox="0 0 13 15" fill="none" stroke="#1b7cf5" stroke-width="1.3"><path d="M3 0.8 H11.5 V12"/><path d="M0.9 3 H9 V14.2 H3.5 L0.9 11.6Z"/><path d="M0.9 11.6 H3.5 V14.2"/></svg><div class="abs" style="left:980px;top:17px;width:1px;height:13px;background:#eee"></div><svg class="abs" style="left:992px;top:17px" width="13" height="14" viewBox="0 0 13 14" fill="none" stroke="#ef7474" stroke-width="1.2"><path d="M0.5 2.8 H12.5 M2 2.8 L2.8 13.2 H10.2 L11 2.8 M4 2.8 V0.8 H9 V2.8"/></svg></div>
<div class="abs" style="left:0;top:538px;width:1033px;height:49px;background:#fff;border-bottom:1px solid #efefef"><div class="chk" style="left:12px;top:16px"></div><div class="abs" style="left:40px;top:0;width:50px;line-height:48px;text-align:center">11</div><div class="abs" style="left:90px;top:0;width:321px;line-height:48px;text-align:center">11</div><div class="abs" style="left:411px;top:0;width:322px;line-height:48px;text-align:center">布依族</div><div class="abs" style="left:751px;top:0;line-height:48px;white-space:nowrap"><span class="dot"></span>启用</div><div class="abs" style="left:812px;top:0;width:80px;line-height:48px;text-align:center">10</div><svg class="abs" style="left:918px;top:17px" width="15" height="15" viewBox="0 0 15 15" fill="none" stroke="#4d9ff7" stroke-width="1.2"><path d="M7 2.2 H1.2 V13.6 H12.6 V8"/><path d="M5 9.8 L5.5 7.3 L11.6 1.2 L13.8 3.4 L7.7 9.5Z"/></svg><div class="abs" style="left:943px;top:17px;width:1px;height:13px;background:#eee"></div><svg class="abs" style="left:955px;top:17px" width="13" height="15" viewBox="0 0 13 15" fill="none" stroke="#1b7cf5" stroke-width="1.3"><path d="M3 0.8 H11.5 V12"/><path d="M0.9 3 H9 V14.2 H3.5 L0.9 11.6Z"/><path d="M0.9 11.6 H3.5 V14.2"/></svg><div class="abs" style="left:980px;top:17px;width:1px;height:13px;background:#eee"></div><svg class="abs" style="left:992px;top:17px" width="13" height="14" viewBox="0 0 13 14" fill="none" stroke="#ef7474" stroke-width="1.2"><path d="M0.5 2.8 H12.5 M2 2.8 L2.8 13.2 H10.2 L11 2.8 M4 2.8 V0.8 H9 V2.8"/></svg></div>
<div class="abs" style="left:0;top:587px;width:1033px;height:49px;background:#fafafa;border-bottom:1px solid #efefef"><div class="chk" style="left:12px;top:16px"></div><div class="abs" style="left:40px;top:0;width:50px;line-height:48px;text-align:center">12</div><div class="abs" style="left:90px;top:0;width:321px;line-height:48px;text-align:center">12</div><div class="abs" style="left:411px;top:0;width:322px;line-height:48px;text-align:center">侗族</div><div class="abs" style="left:751px;top:0;line-height:48px;white-space:nowrap"><span class="dot"></span>启用</div><div class="abs" style="left:812px;top:0;width:80px;line-height:48px;text-align:center">11</div><svg class="abs" style="left:918px;top:17px" width="15" height="15" viewBox="0 0 15 15" fill="none" stroke="#4d9ff7" stroke-width="1.2"><path d="M7 2.2 H1.2 V13.6 H12.6 V8"/><path d="M5 9.8 L5.5 7.3 L11.6 1.2 L13.8 3.4 L7.7 9.5Z"/></svg><div class="abs" style="left:943px;top:17px;width:1px;height:13px;background:#eee"></div><svg class="abs" style="left:955px;top:17px" width="13" height="15" viewBox="0 0 13 15" fill="none" stroke="#1b7cf5" stroke-width="1.3"><path d="M3 0.8 H11.5 V12"/><path d="M0.9 3 H9 V14.2 H3.5 L0.9 11.6Z"/><path d="M0.9 11.6 H3.5 V14.2"/></svg><div class="abs" style="left:980px;top:17px;width:1px;height:13px;background:#eee"></div><svg class="abs" style="left:992px;top:17px" width="13" height="14" viewBox="0 0 13 14" fill="none" stroke="#ef7474" stroke-width="1.2"><path d="M0.5 2.8 H12.5 M2 2.8 L2.8 13.2 H10.2 L11 2.8 M4 2.8 V0.8 H9 V2.8"/></svg></div>
<div class="abs" style="left:0;top:636px;width:1033px;height:49px;background:#fff;border-bottom:1px solid #efefef"><div class="chk" style="left:12px;top:16px"></div><div class="abs" style="left:40px;top:0;width:50px;line-height:48px;text-align:center">13</div><div class="abs" style="left:90px;top:0;width:321px;line-height:48px;text-align:center">13</div><div class="abs" style="left:411px;top:0;width:322px;line-height:48px;text-align:center">瑶族</div><div class="abs" style="left:751px;top:0;line-height:48px;white-space:nowrap"><span class="dot"></span>启用</div><div class="abs" style="left:812px;top:0;width:80px;line-height:48px;text-align:center">12</div><svg class="abs" style="left:918px;top:17px" width="15" height="15" viewBox="0 0 15 15" fill="none" stroke="#4d9ff7" stroke-width="1.2"><path d="M7 2.2 H1.2 V13.6 H12.6 V8"/><path d="M5 9.8 L5.5 7.3 L11.6 1.2 L13.8 3.4 L7.7 9.5Z"/></svg><div class="abs" style="left:943px;top:17px;width:1px;height:13px;background:#eee"></div><svg class="abs" style="left:955px;top:17px" width="13" height="15" viewBox="0 0 13 15" fill="none" stroke="#1b7cf5" stroke-width="1.3"><path d="M3 0.8 H11.5 V12"/><path d="M0.9 3 H9 V14.2 H3.5 L0.9 11.6Z"/><path d="M0.9 11.6 H3.5 V14.2"/></svg><div class="abs" style="left:980px;top:17px;width:1px;height:13px;background:#eee"></div><svg class="abs" style="left:992px;top:17px" width="13" height="14" viewBox="0 0 13 14" fill="none" stroke="#ef7474" stroke-width="1.2"><path d="M0.5 2.8 H12.5 M2 2.8 L2.8 13.2 H10.2 L11 2.8 M4 2.8 V0.8 H9 V2.8"/></svg></div>
<div class="abs" style="left:0;top:685px;width:1033px;height:49px;background:#fafafa;border-bottom:1px solid #efefef"><div class="chk" style="left:12px;top:16px"></div><div class="abs" style="left:40px;top:0;width:50px;line-height:48px;text-align:center">14</div><div class="abs" style="left:90px;top:0;width:321px;line-height:48px;text-align:center">14</div><div class="abs" style="left:411px;top:0;width:322px;line-height:48px;text-align:center">白族</div><div class="abs" style="left:751px;top:0;line-height:48px;white-space:nowrap"><span class="dot"></span>启用</div><div class="abs" style="left:812px;top:0;width:80px;line-height:48px;text-align:center">13</div><svg class="abs" style="left:918px;top:17px" width="15" height="15" viewBox="0 0 15 15" fill="none" stroke="#4d9ff7" stroke-width="1.2"><path d="M7 2.2 H1.2 V13.6 H12.6 V8"/><path d="M5 9.8 L5.5 7.3 L11.6 1.2 L13.8 3.4 L7.7 9.5Z"/></svg><div class="abs" style="left:943px;top:17px;width:1px;height:13px;background:#eee"></div><svg class="abs" style="left:955px;top:17px" width="13" height="15" viewBox="0 0 13 15" fill="none" stroke="#1b7cf5" stroke-width="1.3"><path d="M3 0.8 H11.5 V12"/><path d="M0.9 3 H9 V14.2 H3.5 L0.9 11.6Z"/><path d="M0.9 11.6 H3.5 V14.2"/></svg><div class="abs" style="left:980px;top:17px;width:1px;height:13px;background:#eee"></div><svg class="abs" style="left:992px;top:17px" width="13" height="14" viewBox="0 0 13 14" fill="none" stroke="#ef7474" stroke-width="1.2"><path d="M0.5 2.8 H12.5 M2 2.8 L2.8 13.2 H10.2 L11 2.8 M4 2.8 V0.8 H9 V2.8"/></svg></div>
<div class="abs" style="left:0px;top:0;width:1px;height:693px;background:#efefef"></div>
<div class="abs" style="left:40px;top:0;width:1px;height:693px;background:#efefef"></div>
<div class="abs" style="left:90px;top:0;width:1px;height:693px;background:#efefef"></div>
<div class="abs" style="left:411px;top:0;width:1px;height:693px;background:#efefef"></div>
<div class="abs" style="left:732px;top:0;width:1px;height:693px;background:#efefef"></div>
<div class="abs" style="left:812px;top:0;width:1px;height:693px;background:#efefef"></div>
<div class="abs" style="left:892px;top:0;width:1px;height:693px;background:#efefef"></div>
<div class="abs" style="left:1032px;top:0;width:1px;height:693px;background:#efefef"></div>
</div>
<div class="note" style="left:213px;top:179px;width:255px;height:31px;line-height:32px;padding-left:9px">又称为：字典类型或字典定义</div>
<div class="vl" style="left:220px;top:210px;height:9px"></div>
<div class="badge" style="left:209px;top:218px">1</div>
<div class="note" style="left:822px;top:132px;width:236px;height:31px;line-height:32px;padding-left:9px">又称为：字典项或字典明细</div>
<div class="vl" style="left:829px;top:163px;height:10px"></div>
<div class="badge" style="left:818px;top:172px">2</div>
</body></html>
